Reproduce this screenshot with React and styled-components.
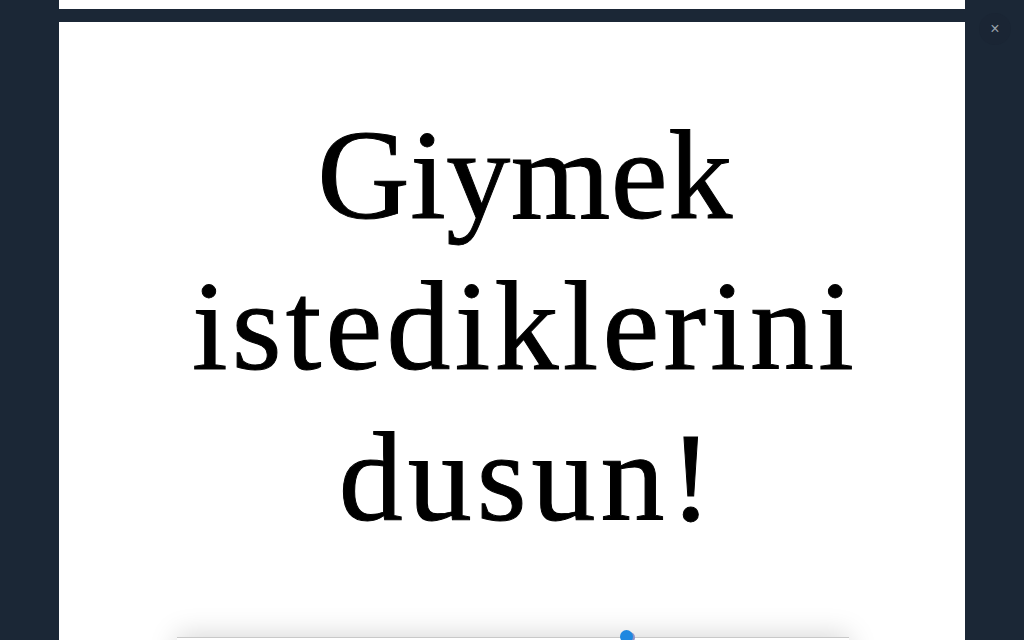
import React from "react";
import styled, { createGlobalStyle } from "styled-components";

const GlobalStyle = createGlobalStyle`
  html, body {
    margin: 0;
    height: 100%;
    overflow: hidden;
    background: #1b2736;
  }
`;

const Overlay = styled.div`
  position: relative;
  width: 1024px;
  height: 640px;
  overflow: hidden;
  display: flex;
  flex-direction: column;
  align-items: center;
  gap: 13px;
  background: #1b2736;
`;

const PreviousSlide = styled.div`
  width: 906px;
  height: 9px;
  flex: none;
  background: #fff;
`;

const Slide = styled.section`
  width: 906px;
  flex: 1;
  min-height: 0;
  overflow: hidden;
  background: #fff;
  display: flex;
  flex-direction: column;
  align-items: center;
  padding-top: 78px;
  box-sizing: border-box;
`;

const Title = styled.h1`
  margin: 0 0 0 26px;
  font-family: "Liberation Serif", serif;
  font-weight: 400;
  font-size: 128px;
  line-height: 151px;
  text-align: center;
  color: #000;
  -webkit-text-stroke: 1px #000;
`;

const Line = styled.span`
  display: block;
  white-space: nowrap;
  letter-spacing: ${(props) => props.$tracking}px;
  transform: translateX(${(props) => props.$shift || 0}px);
`;

const Preview = styled.div`
  position: relative;
  flex: none;
  width: 672px;
  height: 40px;
  margin-top: 84px;
  margin-left: 2px;
  background: #fff;
  border-top: 1px solid #c8c8c8;
  box-shadow: 0 -2px 28px rgba(0, 0, 0, 0.17);
`;

const Marker = styled.span`
  position: absolute;
  top: -8px;
  left: 443px;
  width: 13px;
  height: 13px;
  border-radius: 50%;
  background: #1e88e0;
  box-shadow: 3px 1px 0 -1px #8b93c9;
`;

const CloseButton = styled.button`
  position: absolute;
  top: 13px;
  right: 13px;
  width: 32px;
  height: 32px;
  padding: 0;
  border: 0;
  border-radius: 50%;
  background: #1a2534;
  color: #98a1ab;
  font: 16px "Liberation Sans", sans-serif;
`;

export default function App() {
  return (
    <>
      <GlobalStyle />
      <Overlay>
        <PreviousSlide />
        <Slide>
          <Title>
            <Line $tracking={0.5}>Giymek</Line>
            <Line $tracking={4.2}>istediklerini</Line>
            <Line $tracking={5} $shift={3}>dusun!</Line>
          </Title>
          <Preview>
            <Marker />
          </Preview>
        </Slide>
        <CloseButton aria-label="Kapat">×</CloseButton>
      </Overlay>
    </>
  );
}
